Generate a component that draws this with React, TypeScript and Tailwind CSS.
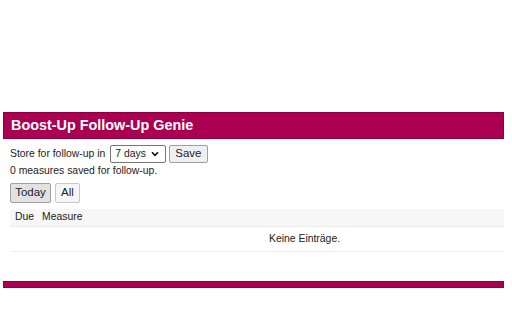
import React, { useState } from "react";

export default function App() {
  const [days, setDays] = useState("7");
  const [filter, setFilter] = useState<"today" | "all">("today");

  return (
    <div className="w-[512px] h-[320px] bg-white pt-[112px] font-['Liberation_Sans',Arial,sans-serif] text-[10.4px] text-[#222] overflow-hidden">
      {/* Header */}
      <div className="ml-[3px] w-[501px] h-[27px] bg-[#ab0051] border border-[#8c0042] flex items-center pl-[7px]">
        <h1 className="text-white font-bold text-[14.4px] leading-none">Boost-Up Follow-Up Genie</h1>
      </div>

      <div className="ml-[10px] w-[494px]">
        {/* Store row */}
        <div className="flex items-center mt-[6px] h-[18px]">
          <span>Store for follow-up in</span>
          <div className="relative ml-[5px] w-[56px] shrink-0">
            <select
              value={days}
              onChange={(e) => setDays(e.target.value)}
              className="appearance-none block w-[56px] h-[18px] border border-[#767676] rounded-[2px] bg-white pl-[4px] text-[10.4px] leading-none"
            >
              <option value="1">1 day</option>
              <option value="3">3 days</option>
              <option value="7">7 days</option>
              <option value="14">14 days</option>
            </select>
            <svg className="absolute right-[7px] top-[6px] pointer-events-none" width="8" height="6" viewBox="0 0 8 6">
              <path d="M1 1.2 L4 4.4 L7 1.2" fill="none" stroke="#111" strokeWidth="1.6" />
            </svg>
          </div>
          <button className="ml-[3px] h-[18px] px-[5px] border border-[#a0a0a0] rounded-[2px] bg-[#f0f0f0] text-[11.5px] leading-none">
            Save
          </button>
        </div>

        <div className="mt-[1px] leading-[14px]">0 measures saved for follow-up.</div>

        {/* Filter buttons */}
        <div className="flex gap-[4px] mt-[5px]">
          <button
            onClick={() => setFilter("today")}
            className={
              filter === "today"
                ? "h-[20px] w-[41px] border border-[#a0a0a0] rounded-[2px] bg-[#e2e2e2] text-[11.5px] leading-none"
                : "h-[20px] w-[41px] border border-[#c0c0c0] rounded-[2px] bg-[#f4f4f4] text-[11.5px] leading-none"
            }
          >
            Today
          </button>
          <button
            onClick={() => setFilter("all")}
            className={
              filter === "all"
                ? "h-[20px] w-[25px] border border-[#a0a0a0] rounded-[2px] bg-[#e2e2e2] text-[11.5px] leading-none"
                : "h-[20px] w-[25px] border border-[#c8c8c8] rounded-[2px] bg-[#f6f6f6] text-[11.5px] leading-none"
            }
          >
            All
          </button>
        </div>

        {/* Table */}
        <table className="w-full mt-[6px] border-collapse">
          <thead>
            <tr className="bg-[#f7f7f7] h-[17px] border-b border-[#ececec]">
              <th className="text-left font-normal pl-[5px] pr-[8px] w-[1px] whitespace-nowrap">Due</th>
              <th className="text-left font-normal">Measure</th>
            </tr>
          </thead>
          <tbody>
            <tr className="h-[25px] border-b border-[#efefef]">
              <td colSpan={2} className="pl-[259px]">Keine Einträge.</td>
            </tr>
          </tbody>
        </table>
      </div>

      {/* Footer bar */}
      <div className="ml-[3px] mt-[29px] w-[501px] h-[7px] bg-[#ab0051] border border-[#8c0042]" />
    </div>
  );
}
